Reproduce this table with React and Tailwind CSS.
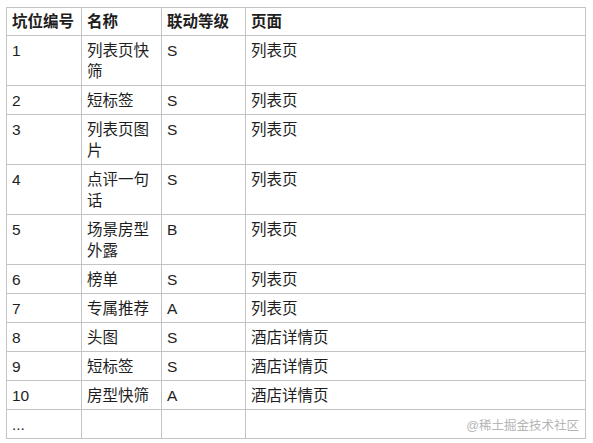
import React from 'react';

const rows = [
  ['1', '列表页快筛', 'S', '列表页'],
  ['2', '短标签', 'S', '列表页'],
  ['3', '列表页图片', 'S', '列表页'],
  ['4', '点评一句话', 'S', '列表页'],
  ['5', '场景房型外露', 'B', '列表页'],
  ['6', '榜单', 'S', '列表页'],
  ['7', '专属推荐', 'A', '列表页'],
  ['8', '头图', 'S', '酒店详情页'],
  ['9', '短标签', 'S', '酒店详情页'],
  ['10', '房型快筛', 'A', '酒店详情页'],
  ['...', '', '', ''],
];

const cell = 'border border-[#c4c4c4] pl-[5px] pr-[4px] pt-[4px] pb-[3px] align-top text-left';
const head = 'border border-[#c4c4c4] pl-[5px] pr-[4px] pt-[3px] pb-[3px] align-top text-left font-bold';

export default function App() {
  return (
    <div
      className="w-[593px] h-[443px] bg-white pl-[6px] pt-[7px] text-[#1e1e1e] text-[15.5px] leading-[21px]"
      style={{ fontFamily: '"Liberation Sans", "Noto Sans CJK SC", sans-serif' }}
    >
      <div className="relative w-[580px]">
        <table className="w-[580px] table-fixed border-collapse">
          <colgroup>
            <col className="w-[75px]" />
            <col className="w-[80px]" />
            <col className="w-[84px]" />
            <col />
          </colgroup>
          <thead>
            <tr>
              <th className={head}>坑位编号</th>
              <th className={head}>名称</th>
              <th className={head}>联动等级</th>
              <th className={head}>页面</th>
            </tr>
          </thead>
          <tbody>
            {rows.map((r, i) => (
              <tr key={i}>
                {r.map((c, j) => (
                  <td key={j} className={cell}>
                    {c || '\u00a0'}
                  </td>
                ))}
              </tr>
            ))}
          </tbody>
        </table>
        <span className="absolute right-[7px] bottom-[5px] text-[12.5px] leading-[16px] text-[#b5b5b5]">
          @稀土掘金技术社区
        </span>
      </div>
    </div>
  );
}
